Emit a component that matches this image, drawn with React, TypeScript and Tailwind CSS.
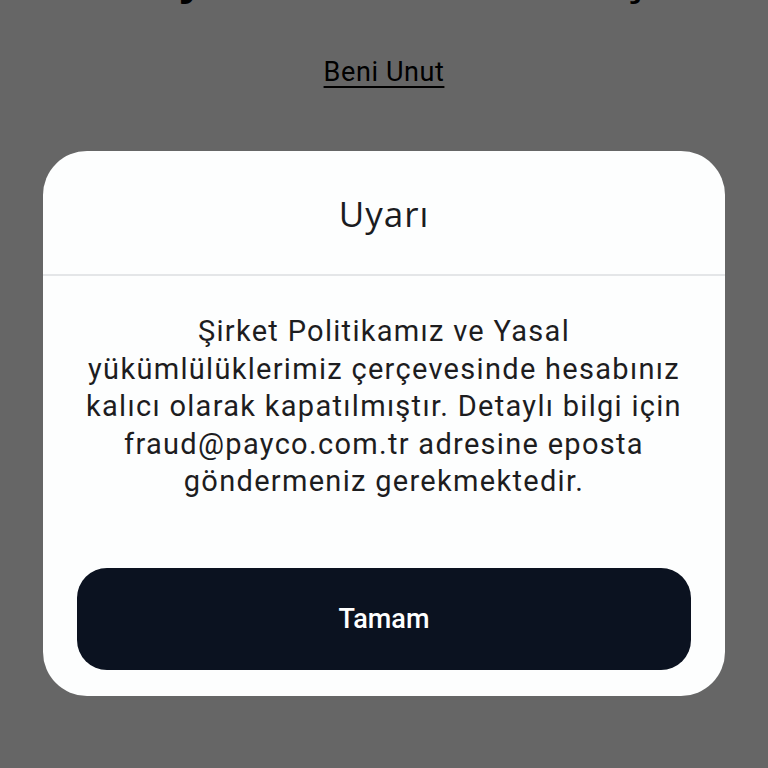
export default function App() {
  return (
    <div className="relative min-h-screen overflow-hidden bg-white font-['Roboto',sans-serif]">
      <div className="flex flex-col items-center">
        <h1 className="-mt-[46px] whitespace-nowrap text-[48px] font-bold leading-[48px] text-black font-['Liberation_Sans',sans-serif]">
          Payco Hesabınıza Giriş
        </h1>
        <a href="#" className="mt-[55px] text-[27px] leading-[30px] tracking-[0.6px] text-black underline underline-offset-[5px]">
          Beni Unut
        </a>
      </div>

      <div className="fixed inset-0 flex items-start justify-center bg-black/60 px-[43px] pt-[151px]">
        <div className="flex w-full flex-col rounded-[44px] bg-[#fdfefe]">
          <div className="flex h-[125px] items-center justify-center border-b-2 border-[#e4e6e8]">
            <h2 className="pt-[4px] text-[35px] font-medium tracking-[1px] text-[#1b1c1f] font-['Open_Sans',sans-serif]">Uyarı</h2>
          </div>
          <p className="px-[10px] pt-[37px] text-center text-[29px] leading-[37.6px] tracking-[1.3px] text-[#1d1d1f]">
            Şirket Politikamız ve Yasal
            <br />
            yükümlülüklerimiz çerçevesinde hesabınız
            <br />
            kalıcı olarak kapatılmıştır. Detaylı bilgi için
            <br />
            fraud@payco.com.tr adresine eposta
            <br />
            göndermeniz gerekmektedir.
          </p>
          <div className="px-[34px] pt-[67px] pb-[26px]">
            <button
              type="button"
              className="flex h-[102px] w-full items-center justify-center rounded-[30px] bg-[#0b1220] text-[27px] font-medium text-white"
            >
              Tamam
            </button>
          </div>
        </div>
      </div>
    </div>
  );
}
